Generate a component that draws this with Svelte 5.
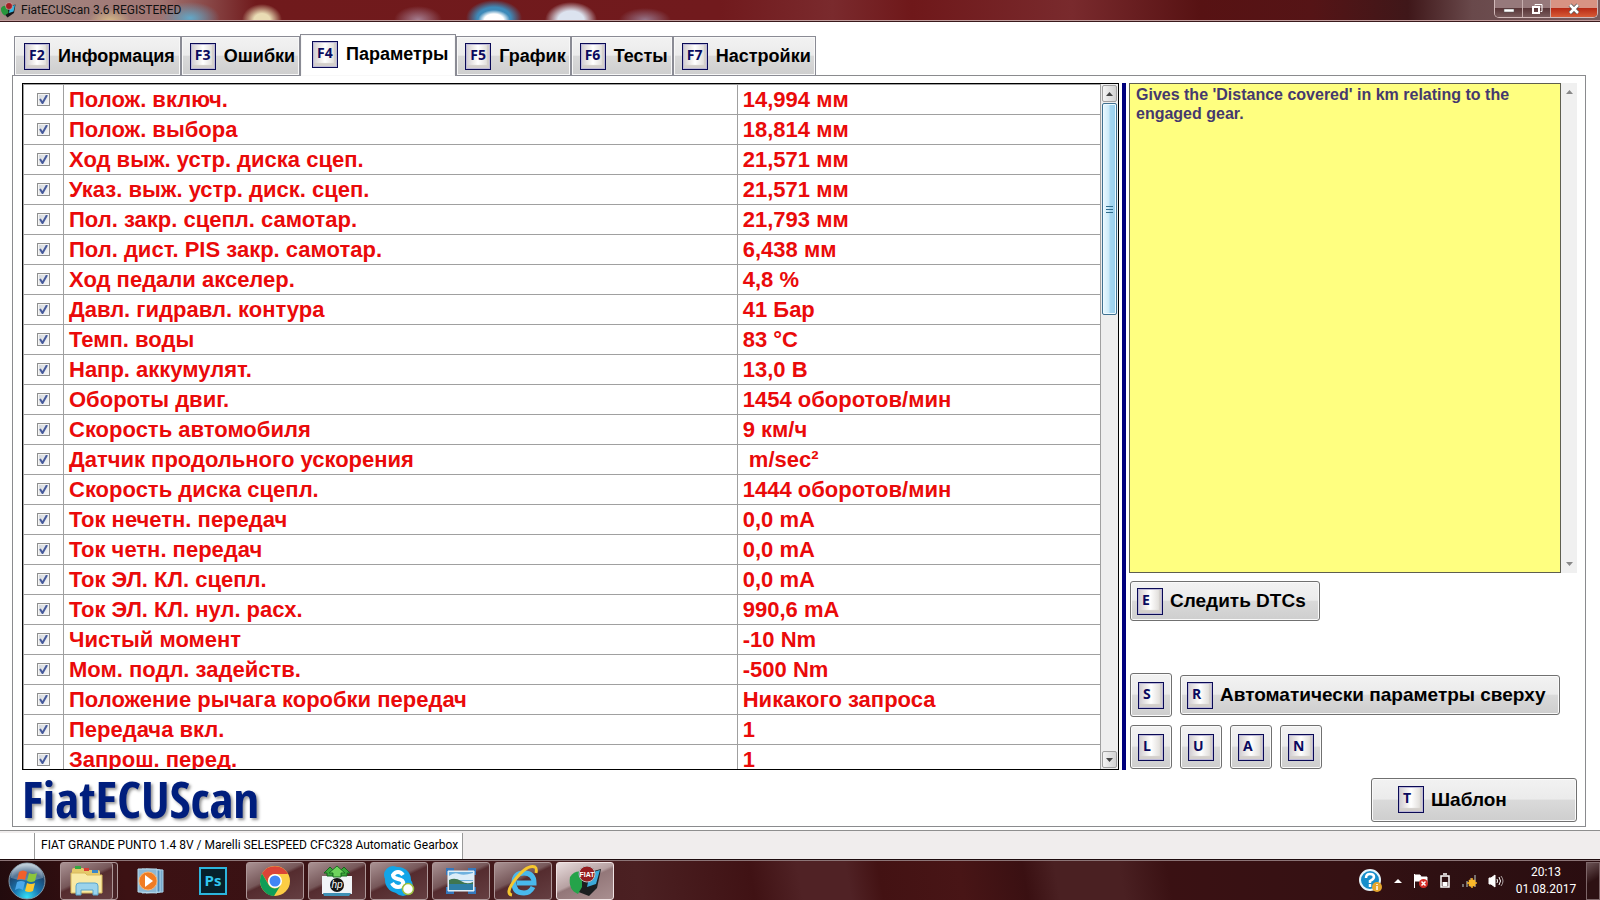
<script>
  const tabs = [
    { key: "F2", name: "Информация" },
    { key: "F3", name: "Ошибки" },
    { key: "F4", name: "Параметры" },
    { key: "F5", name: "График" },
    { key: "F6", name: "Тесты" },
    { key: "F7", name: "Настройки" },
  ];

  let active = "F4";

  let params = [
    ["Полож. включ.", "14,994 мм"],
    ["Полож. выбора", "18,814 мм"],
    ["Ход выж. устр. диска сцеп.", "21,571 мм"],
    ["Указ. выж. устр. диск. сцеп.", "21,571 мм"],
    ["Пол. закр. сцепл. самотар.", "21,793 мм"],
    ["Пол. дист. PIS закр. самотар.", "6,438 мм"],
    ["Ход педали акселер.", "4,8 %"],
    ["Давл. гидравл. контура", "41 Бар"],
    ["Темп. воды", "83 °C"],
    ["Напр. аккумулят.", "13,0 В"],
    ["Обороты двиг.", "1454 оборотов/мин"],
    ["Скорость автомобиля", "9 км/ч"],
    ["Датчик продольного ускорения", "\u00a0m/sec²"],
    ["Скорость диска сцепл.", "1444 оборотов/мин"],
    ["Ток нечетн. передач", "0,0 mA"],
    ["Ток четн. передач", "0,0 mA"],
    ["Ток ЭЛ. КЛ. сцепл.", "0,0 mA"],
    ["Ток ЭЛ. КЛ. нул. расх.", "990,6 mA"],
    ["Чистый момент", "-10 Nm"],
    ["Мом. подл. задейств.", "-500 Nm"],
    ["Положение рычага коробки передач", "Никакого запроса"],
    ["Передача вкл.", "1"],
    ["Запрош. перед.", "1"],
  ].map(([name, value]) => ({ name, value, checked: true }));

  const smallKeys = ["L", "U", "A", "N"];
</script>

<div class="screen">
  <header class="titlebar">
    <svg class="appicon" width="16" height="16" viewBox="0 0 32 32">
      <path d="M16 9l15-4-3 17-13 9-7-8z" fill="#17191c" />
      <path d="M20 9l10-3-3 13-9 3z" fill="#35b5e0" />
      <path d="M2 12q6-8 13-2l2 12-8 5q-8-5-7-15z" fill="#27963c" />
      <circle cx="18" cy="8" r="7" fill="#a41e22" stroke="#ddd" />
    </svg>
    <span>FiatECUScan 3.6 REGISTERED</span>
    <div class="winbuttons">
      <button aria-label="Minimize">
        <svg width="12" height="12"><rect x="1" y="6" width="10" height="3" fill="#fff" stroke="#555" stroke-width=".5" /></svg>
      </button>
      <button aria-label="Restore">
        <svg width="12" height="12" fill="none" stroke="#fff">
          <path d="M4 2.500V1.500h7v7H9.500" />
          <rect x="2" y="4" width="6" height="6" stroke-width="2" />
        </svg>
      </button>
      <button class="close" aria-label="Close">
        <svg width="12" height="12"><path d="M2 2l8 8M10 2l-8 8" stroke="#555" stroke-width="4" /><path d="M2 2l8 8M10 2l-8 8" stroke="#fff" stroke-width="2.500" /></svg>
      </button>
    </div>
  </header>

  <nav class="tabs">
    {#each tabs as tab}
      <button class="tab" class:active={active === tab.key} on:click={() => (active = tab.key)}>
        <span class="key">{tab.key}</span>
        <span>{tab.name}</span>
      </button>
    {/each}
  </nav>

  <main class="panel">
    <div class="content">
      <section class="grid">
        <div class="rows">
          <table>
            <tbody>
              {#each params as param, i}
                <tr>
                  <td class="check"><input type="checkbox" id="param{i}" bind:checked={param.checked} /></td>
                  <td class="name"><label for="param{i}">{param.name}</label></td>
                  <td>{param.value}</td>
                </tr>
              {/each}
            </tbody>
          </table>
        </div>
        <div class="scrollbar">
          <button class="arrow" aria-label="Scroll up">
            <svg width="7" height="4"><path d="M0 4l3.500-4L7 4z" fill="#444" /></svg>
          </button>
          <div class="thumb"><i></i><i></i><i></i></div>
          <div class="track"></div>
          <button class="arrow" aria-label="Scroll down">
            <svg width="7" height="4"><path d="M0 0l3.500 4L7 0z" fill="#444" /></svg>
          </button>
        </div>
      </section>
      <div class="splitter"></div>
      <aside>
        <div class="help">
          <p>Gives the 'Distance covered' in km relating to the engaged gear.</p>
          <div class="helpscroll">
            <svg width="7" height="4"><path d="M0 4l3.500-4L7 4z" fill="#888" /></svg>
            <svg width="7" height="4"><path d="M0 0l3.500 4L7 0z" fill="#888" /></svg>
          </div>
        </div>
        <div class="line">
          <button class="btn"><span class="key">E</span>Следить DTCs</button>
        </div>
        <div class="line bottom">
          <button class="btn square"><span class="key">S</span></button>
          <button class="btn"><span class="key">R</span>Автоматически параметры сверху</button>
        </div>
        <div class="line">
          {#each smallKeys as key}
            <button class="btn square"><span class="key">{key}</span></button>
          {/each}
        </div>
      </aside>
    </div>
    <footer>
      <div class="logo">FiatECUScan</div>
      <button class="btn template"><span class="key">T</span>Шаблон</button>
    </footer>
  </main>

  <div class="status">
    <span class="blank"></span>
    <span class="car">FIAT GRANDE PUNTO 1.4 8V / Marelli SELESPEED CFC328 Automatic Gearbox</span>
  </div>

  <div class="taskbar">
    <button class="start" aria-label="Start">
      <svg width="38" height="38" viewBox="0 0 38 38">
        <defs>
          <radialGradient id="orb" cx=".5" cy=".95" r=".9">
            <stop offset="0" stop-color="#35e1f5" />
            <stop offset=".4" stop-color="#1977b3" />
            <stop offset=".75" stop-color="#1c4771" />
            <stop offset="1" stop-color="#a9bccb" />
          </radialGradient>
        </defs>
        <circle cx="19" cy="19" r="18" fill="url(#orb)" stroke="#8399a8" />
        <path d="M3 16a16 15 0 0 1 32 0q-16 5-32 0z" fill="#fff" opacity=".25" />
        <path d="M11 10q4-3 8 0l-2 8q-4-2-8 0z" fill="#f0602a" />
        <path d="M21 11q4 2 8 0l-2 8q-4 2-8 0z" fill="#8cc63c" />
        <path d="M9 20q4-2 8 0l-2 8q-4-3-8 0z" fill="#4aa8ea" />
        <path d="M19 21q4 2 8 0l-2 8q-4 2-8 0z" fill="#fcc930" />
      </svg>
    </button>

    <button class="task open stacked" aria-label="Explorer">
      <svg width="34" height="32" viewBox="0 0 34 32">
        <path d="M2 5q0-2 2-2h9l2 2h13q2 0 2 2v20H2z" fill="#e5c96a" />
        <path d="M5 1h6v3H5z" fill="#35a844" /><path d="M14 3h5v3h-5z" fill="#d93c35" /><path d="M22 5h6v3h-6z" fill="#3987c8" />
        <path d="M1 8h14l2 2h15v18H1z" fill="#f8e9a5" stroke="#d8b95d" />
        <path d="M6 30v-9q0-3 3-3h16q3 0 3 3v9h-5v-5H11v5z" fill="#9bd3ec" stroke="#5aa5cb" />
      </svg>
    </button>
    <button class="task" aria-label="Media Player">
      <svg width="28" height="28" viewBox="0 0 28 28">
        <path d="M9 2l17 1v22l-17 1z" fill="#78a9cc" stroke="#a8d0e7" />
        <path d="M5 2l18 1v22l-18 1z" fill="#4d8ab8" stroke="#b4d7ea" />
        <path d="M1 2h19v24l-19-1z" fill="#8db8d5" stroke="#b9dced" />
        <circle cx="11" cy="14" r="9" fill="#f07c23" stroke="#fbb36f" /><path d="M8 8l8 6-8 6z" fill="#fff" />
      </svg>
    </button>
    <button class="task ps" aria-label="Photoshop"><span>Ps</span></button>
    <button class="task open" aria-label="Chrome">
      <svg width="30" height="30" viewBox="0 0 30 30">
        <circle cx="15" cy="15" r="15" fill="#fccd45" />
        <path d="M2 7.500A15 15 0 0 1 28 8H15a7 7 0 0 0-6.500 10z" fill="#db4437" />
        <path d="M2 7.500A15 15 0 0 0 14 30l6.500-10.500a7 7 0 0 1-12-1z" fill="#109d58" />
        <circle cx="15" cy="15" r="7" fill="#fff" /><circle cx="15" cy="15" r="5.500" fill="#4285f4" />
      </svg>
    </button>
    <button class="task open" aria-label="HP">
      <svg width="32" height="32" viewBox="0 0 32 32">
        <path d="M1 11h30v18H1z" fill="#f1f4f7" /><path d="M2 28h28l-2 3H3z" fill="#3f90b4" />
        <path d="M6 11V8H3l6-6 6 6h-3v3zM20 11V8h-3l6-6 6 6h-3v3z" fill="#3ba63a" stroke="#17661e" />
        <path d="M12 12V8H8l8-7 8 7h-4v4z" fill="#6fd45d" stroke="#1c7125" />
        <circle cx="16" cy="20" r="7" fill="#151515" />
        <text x="16" y="23" text-anchor="middle" fill="#fff" font-size="10" font-style="italic">hp</text>
      </svg>
    </button>
    <button class="task open" aria-label="Skype">
      <svg width="32" height="32" viewBox="0 0 32 32">
        <circle cx="10" cy="10" r="9" fill="#12a5e8" /><circle cx="20" cy="21" r="10" fill="#12a5e8" /><circle cx="15" cy="15" r="13" fill="#12a5e8" />
        <path d="M20 10q-2-3-5-3t-5 3q0 3 5 4 6 1 5 5-1 3-5 3t-6-4" fill="none" stroke="#fff" stroke-width="4" />
        <circle cx="25" cy="24" r="5.500" fill="#fff" stroke="#9bbe3d" stroke-width="1.500" />
      </svg>
    </button>
    <button class="task open" aria-label="Picture viewer">
      <svg width="30" height="26" viewBox="0 0 30 26">
        <path d="M0 0h8v7H0zM22 0h8v7h-8zM0 19h8v7H0zM22 19h8v7h-8z" fill="#3478bd" />
        <path d="M2 3h26v20H2z" fill="#d9eaf5" stroke="#e8f3f9" />
        <path d="M3 4h24v9H3z" fill="#6fb2df" />
        <path d="M3 8q5-4 10-2t14-1v7H3z" fill="#dcedf8" />
        <path d="M3 12q6-3 12 1t12 1v3H3z" fill="#3f7650" /><path d="M3 16h24v6H3z" fill="#2e7fa6" />
      </svg>
    </button>
    <button class="task open" aria-label="Internet Explorer">
      <svg width="32" height="32" viewBox="0 0 32 32">
        <path d="M26 22q-3 6-9 6-10 0-10-10Q7 8 17 8t10 10H10" fill="none" stroke="#49b9ec" stroke-width="5" />
        <path d="M5 30Q-2 29 7 16 20-1 28 2q2 1 1 6" fill="none" stroke="#f6c72e" stroke-width="3" />
      </svg>
    </button>
    <button class="task open current" aria-label="FiatECUScan">
      <svg width="34" height="32" viewBox="0 0 34 32">
        <path d="M15 9l18-5-4 19-8 8-13-5z" fill="#1c1e20" /><path d="M22 8l10-3-4 14-9 3z" fill="#3da9d8" />
        <path d="M2 12q5-7 12-5v15l-4 7q-10-4-8-17z" fill="#25a34a" />
        <circle cx="19" cy="9" r="8" fill="#951d20" stroke="#bbb" />
        <text x="19" y="12" text-anchor="middle" fill="#fff" font-size="7" font-weight="bold">FIAT</text>
      </svg>
    </button>

    <div class="tray">
      <svg width="24" height="24" viewBox="0 0 24 24">
        <circle cx="11" cy="11" r="10" fill="#168ecb" stroke="#e8f5fb" stroke-width="2" />
        <path d="M7 9q0-4 4-4t4 3q0 2-4 4v2M11 15v3" fill="none" stroke="#fff" stroke-width="2.500" />
        <circle cx="18" cy="18" r="5" fill="#e5a62d" /><path d="M18 15v1M18 17v4" stroke="#fff" stroke-width="1.500" />
      </svg>
      <svg width="8" height="4"><path d="M0 4l4-4 4 4z" fill="#fff" /></svg>
      <svg width="16" height="16" viewBox="0 0 16 16">
        <path d="M1.500 1v14M2 2h5l1 2h6v6H8L7 8H2z" fill="#fff" stroke="#fff" />
        <circle cx="10.500" cy="10.500" r="4.500" fill="#d32d27" /><path d="M8.500 8.500l4 4M12.500 8.500l-4 4" stroke="#fff" stroke-width="1.500" />
      </svg>
      <svg width="10" height="16" viewBox="0 0 10 16">
        <path d="M3 1h4M1 3h8v11H1z" fill="none" stroke="#fff" stroke-width="1.500" /><path d="M2.500 9h5v4h-5z" fill="#fff" />
      </svg>
      <svg width="16" height="16" viewBox="0 0 16 16">
        <path d="M1 11h2v3H1zM5 8h2v6H5zM9 5h2v9H9zM13 2h2v12h-2z" fill="#77706f" />
        <path d="M11 5v10M6 10h10M8 7l6 6M14 7l-6 6" stroke="#f6ac1d" stroke-width="1.500" /><circle cx="11" cy="10" r="3.500" fill="#f9b72a" />
      </svg>
      <svg width="16" height="16" viewBox="0 0 16 16" fill="none" stroke="#fff">
        <path d="M1 5h2l4-3v12l-4-3H1z" fill="#fff" /><path d="M9 6q1 2 0 4M11 4q3 4 0 8" /><path d="M13 3q4 5 0 10" opacity=".6" />
      </svg>
    </div>
    <div class="clock"><span>20:13</span><span>01.08.2017</span></div>
    <button class="desktop" aria-label="Show desktop"></button>
  </div>
</div>

<style>
  :global(body) {
    margin: 0;
    background: #fff;
  }
  .screen {
    height: 100vh;
    display: flex;
    flex-direction: column;
    overflow: hidden;
    font-family: "Liberation Sans", Arial, sans-serif;
  }
  button {
    font: inherit;
    color: inherit;
    margin: 0;
    padding: 0;
  }
  svg {
    display: block;
    flex: none;
  }

  .titlebar {
    height: 20px;
    flex: none;
    display: flex;
    align-items: flex-start;
    gap: 5px;
    border-bottom: 1px solid #c09c9c;
    box-shadow: 0 1px #3a1a1c;
    font-family: Roboto, sans-serif;
    font-size: 12px;
    line-height: 21px;
    color: #111;
    background:
      radial-gradient(ellipse 22px 14px at 110px 22px, #d8bc88, transparent),
      radial-gradient(ellipse 30px 16px at 190px 18px, #62a8c8, transparent),
      radial-gradient(ellipse 20px 16px at 262px 20px, #e9dcb4 40%, transparent),
      radial-gradient(ellipse 24px 14px at 418px 20px, #a57f92, transparent),
      radial-gradient(ellipse 16px 10px at 494px 20px, #fff 60%, transparent),
      radial-gradient(ellipse 28px 18px at 494px 18px, #3e8ab9 60%, transparent),
      radial-gradient(ellipse 26px 18px at 571px 20px, #dce3ef 50%, transparent),
      radial-gradient(ellipse 26px 12px at 645px 20px, #96758a, transparent),
      linear-gradient(90deg, #a28a85, #a17572 10%, #701a1c 16%, #711a1d 45%, #7a2a2d 52%, #6f181a 57%, #792a2d 67%, #571213 75%, #551416 82%, #3f1719 88%, #69494b 92%, #775b5d);
  }
  .appicon {
    margin-top: 2px;
  }
  .titlebar span {
    flex: 1;
  }
  .winbuttons {
    display: flex;
    height: 17px;
    margin-right: 2px;
    border: 1px solid #d1b9b9;
    border-top: 0;
    border-radius: 0 0 5px 5px;
    overflow: hidden;
  }
  .winbuttons button {
    width: 28px;
    display: flex;
    justify-content: center;
    align-items: center;
    border: 0;
    border-right: 1px solid #c6aeae;
    background: linear-gradient(#96797b 45%, #593638 50%, #795b5c);
  }
  .winbuttons .close {
    width: 46px;
    border-right: 0;
    background: linear-gradient(#d89383 45%, #b82b16 50%, #d75b36);
  }

  .tabs {
    display: flex;
    align-items: flex-end;
    height: 42px;
    flex: none;
    margin: 13px 0 0 14px;
    z-index: 1;
  }
  .tab {
    height: 40px;
    display: flex;
    align-items: center;
    gap: 8px;
    padding: 0 4px 0 8px;
    border: 1px solid #8a8b94;
    background: linear-gradient(#f2f2f2, #ebebeb 48%, #d9d9d9 50%, #cecece);
    box-shadow: inset 0 0 0 1px #f8f8f8;
    font-size: 18px;
    font-weight: bold;
    color: #000;
  }
  .tab:first-child {
    padding: 0 5px 0 9px;
  }
  .tab.active {
    height: 42px;
    padding: 0 7px 2px 11px;
    border-bottom: 0;
    background: #fff;
  }
  .key {
    box-sizing: border-box;
    width: 26px;
    height: 27px;
    flex: none;
    padding-left: 4px;
    border: 1px solid #0a0a55;
    background: linear-gradient(90deg, #cfcbd0, #f2f0ee 35%, #fff 50%, #d8d4d0);
    box-shadow:
      inset 0 0 0 1px #bcb8d8,
      inset -3px -4px 1px #d3cfcb;
    font: bold 14px/21px "Open Sans", sans-serif;
    color: #0a0a5e;
    text-align: left;
  }

  .panel {
    flex: 1;
    min-height: 0;
    display: flex;
    flex-direction: column;
    margin: -1px 14px 3px 12px;
    padding: 7px 8px 4px 9px;
    border: 1px solid #8a8b8e;
  }
  .content {
    flex: 1;
    min-height: 0;
    display: flex;
  }
  .grid {
    flex: 1;
    min-width: 0;
    display: flex;
    border: 1px solid #000;
    background: #fff;
  }
  .rows {
    flex: 1;
    overflow: hidden;
    border-top: 1px solid #a0a0a0;
    border-left: 1px solid #a0a0a0;
  }
  table {
    width: 100%;
    table-layout: fixed;
    border-spacing: 0;
    font-size: 22px;
    font-weight: bold;
    line-height: 29px;
    color: #ea0a0a;
  }
  td {
    height: 29px;
    padding: 0 0 0 5px;
    border-right: 1px solid #a0a0a0;
    border-bottom: 1px solid #a0a0a0;
    white-space: nowrap;
  }
  .check {
    width: 39px;
    padding: 0;
    text-align: center;
  }
  .name {
    width: 62%;
  }
  td input {
    appearance: none;
    display: block;
    width: 13px;
    height: 13px;
    margin: 0 auto;
    border: 1px solid #8e8f8f;
    background: linear-gradient(135deg, #d0d5da, #fafafa);
    box-shadow: inset 0 0 0 1px #f4f4f4;
  }
  td input:checked {
    background:
      url("data:image/svg+xml,%3Csvg xmlns='http://www.w3.org/2000/svg' viewBox='0 0 11 11'%3E%3Cpath d='M2 5l2.500 4L9 1' fill='none' stroke='%23465a9c' stroke-width='2'/%3E%3C/svg%3E"),
      linear-gradient(135deg, #d0d5da, #fafafa);
  }
  .scrollbar {
    width: 17px;
    flex: none;
    display: flex;
    flex-direction: column;
    background: #eee;
  }
  .arrow {
    height: 17px;
    margin: 1px;
    display: flex;
    align-items: center;
    justify-content: center;
    border: 1px solid #a0a0a0;
    border-radius: 2px;
    background: linear-gradient(90deg, #f4f4f4, #d2d2d2);
  }
  .thumb {
    height: 31%;
    box-sizing: border-box;
    display: flex;
    flex-direction: column;
    align-items: center;
    justify-content: center;
    gap: 2px;
    margin: 0 1px;
    border: 1px solid #3f7191;
    border-radius: 2px;
    background: linear-gradient(90deg, #e0f4fd 15%, #c9e9f8 48%, #a6d7f1 52%, #98cfec);
    box-shadow: inset 0 0 0 1px #eefaff;
  }
  .thumb i {
    width: 7px;
    height: 1px;
    background: #2f6c8d;
  }
  .track {
    flex: 1;
  }
  .splitter {
    width: 4px;
    margin: 0 3px;
    background: #00007d;
  }
  aside {
    width: 448px;
    flex: none;
    display: flex;
    flex-direction: column;
    gap: 8px;
    padding-bottom: 1px;
  }
  .help {
    flex: 1;
    display: flex;
    max-height: 490px;
    font-size: 16px;
    font-weight: bold;
    line-height: 19px;
    color: #45396e;
  }
  .help p {
    flex: 1;
    margin: 0;
    padding: 1px 40px 0 6px;
    border: 1px solid #5f5f4f;
    background: #ffff80;
  }
  .helpscroll {
    width: 16px;
    display: flex;
    flex-direction: column;
    justify-content: space-between;
    align-items: center;
    box-sizing: border-box;
    padding: 7px 0;
    background: #f0f0f0;
  }
  .line {
    display: flex;
    align-items: center;
    gap: 8px;
    padding-left: 1px;
  }
  .bottom {
    margin-top: auto;
  }
  .btn {
    box-sizing: border-box;
    height: 40px;
    display: flex;
    align-items: center;
    gap: 7px;
    padding: 0 13px 0 6px;
    border: 1px solid #707070;
    border-radius: 3px;
    background: linear-gradient(#f2f2f2, #ebebeb 48%, #dadada 50%, #cecece);
    box-shadow: inset 0 0 0 1px #fafafa;
    font-size: 19px;
    font-weight: bold;
    color: #000;
    white-space: nowrap;
  }
  .square {
    width: 42px;
    height: 44px;
    padding: 0;
    justify-content: center;
  }
  footer {
    display: flex;
    justify-content: space-between;
    align-items: center;
    margin-top: 7px;
    height: 45px;
  }
  .logo {
    font-family: "Liberation Sans Narrow", "Open Sans Condensed", "Liberation Sans", sans-serif;
    font-size: 51px;
    font-weight: bold;
    line-height: 42px;
    height: 45px;
    color: #001e7d;
    text-shadow: 2px 2px 3px #999;
  }
  .template {
    width: 206px;
    height: 44px;
    padding: 0 40px 0 26px;
  }

  .status {
    display: flex;
    height: 27px;
    flex: none;
    padding-top: 2px;
    border-top: 1px solid #8e8e8e;
    background: #f0eded;
    font: 12px/25px Roboto, sans-serif;
    color: #000;
  }
  .blank {
    width: 34px;
    background: #fff;
  }
  .car {
    padding: 0 4px 0 6px;
    border-left: 1px solid #999;
    border-right: 1px solid #999;
    background: #fff;
  }

  .taskbar {
    height: 39px;
    flex: none;
    display: flex;
    align-items: center;
    gap: 4px;
    border-top: 1px solid #8c7577;
    box-shadow: 0 -1px #1e0c0e;
    background: linear-gradient(80deg, #220b0d, #3c1113 8%, #3a1214 18%, #4b2022 40%, #401214 47%, #502225 50%, #502225 53%, #431213 55%, #481516 60%, #3a1012 64%, #4a2022 66%, #4a2022 70%, #3a1113 73%, #351113 84%, #2e1012 90%, #2a0d10);
  }
  .taskbar > button {
    border: 0;
    background: none;
  }
  .taskbar .start {
    margin: 0 10px 0 8px;
  }
  .taskbar .task {
    box-sizing: border-box;
    width: 58px;
    height: 38px;
    display: flex;
    align-items: center;
    justify-content: center;
  }
  .taskbar .open {
    border: 1px solid #ad9798;
    border-radius: 3px;
    background: linear-gradient(155deg, #aa9293, #765759 42%, #552c2f 48%, #653f42);
  }
  .taskbar .stacked {
    padding-right: 5px;
    box-shadow: inset -4px 0 #482326, inset -5px 0 #ad9798;
  }
  .taskbar .current {
    border-color: #f0e3e3;
    background: linear-gradient(155deg, #e8dcdc, #b7a1a2 45%, #937779 50%, #a98f90);
  }
  .ps span {
    box-sizing: border-box;
    width: 28px;
    height: 28px;
    border: 2px solid #2cb5dd;
    background: #06202b;
    color: #31c5ee;
    font: bold 15px/23px "Open Sans", sans-serif;
  }
  .tray {
    display: flex;
    align-items: center;
    gap: 11px;
    margin: 0 2px 0 auto;
  }
  .clock {
    width: 72px;
    display: flex;
    flex-direction: column;
    text-align: center;
    font: 12px/17px Roboto, sans-serif;
    color: #fff;
  }
  .taskbar .desktop {
    box-sizing: border-box;
    width: 14px;
    height: 38px;
    border: 1px solid #7d6668;
    background: linear-gradient(150deg, #6b5355, #2d1113 50%);
  }
</style>
